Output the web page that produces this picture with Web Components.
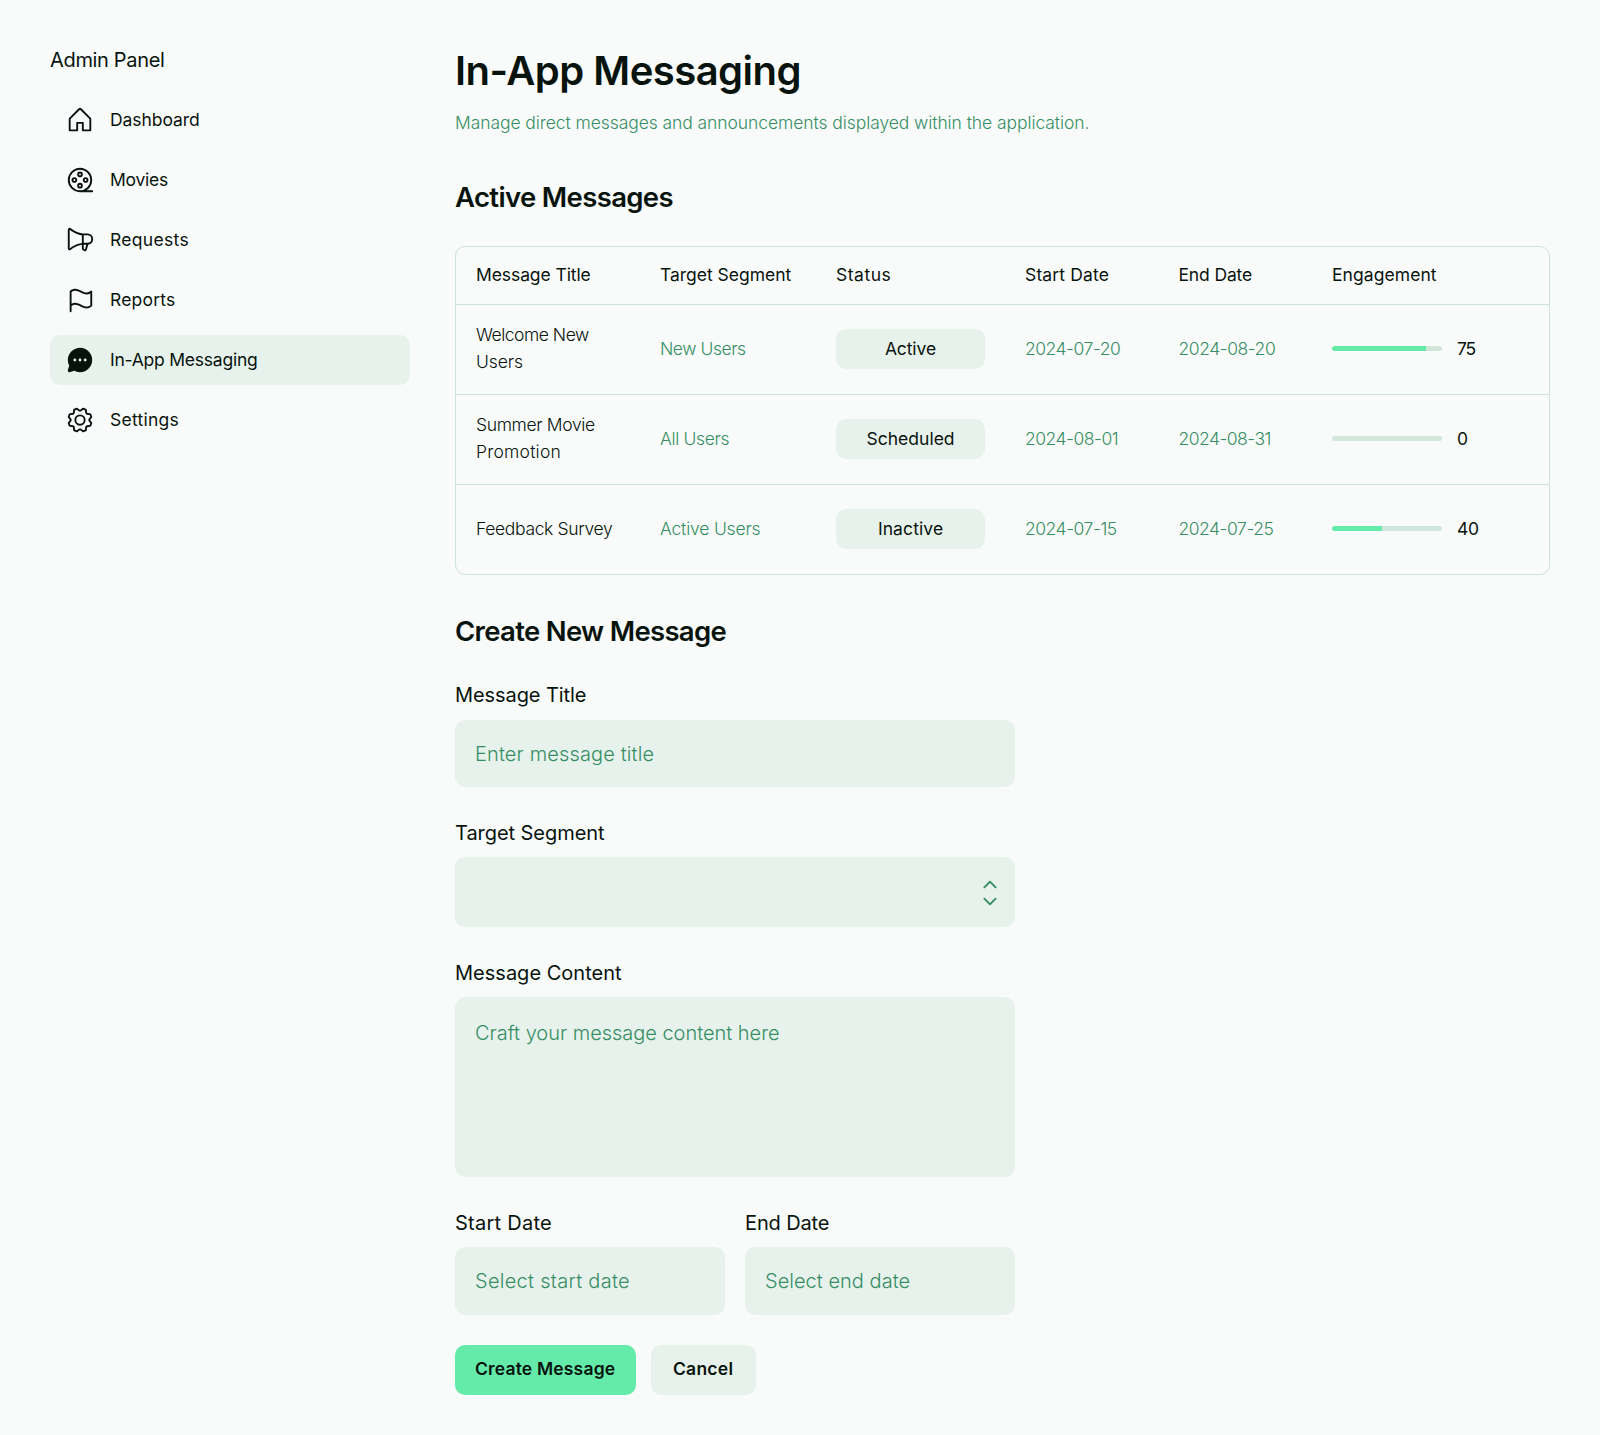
<!DOCTYPE html>
<html lang="en">
<head>
<meta charset="utf-8">
<title>In-App Messaging</title>
<style>
  :root {
    --bg: #f9fbfa; --ink: #08130d; --green: #368e64; --soft: #e8f2ec;
    --line: #cbe4d8; --track: #d0e6da; --primary: #64eba9;
  }
  body { margin: 0; background: var(--bg); color: var(--ink); font: 400 17.5px/26.25px Inter, "Liberation Sans", sans-serif; }
</style>
</head>
<body>
<app-shell>
  <side-nav slot="side">
    <fit-text slot="title" w="114">Admin Panel</fit-text>
    <nav-item icon="house"><fit-text w="88">Dashboard</fit-text></nav-item>
    <nav-item icon="reel"><fit-text w="57">Movies</fit-text></nav-item>
    <nav-item icon="megaphone"><fit-text w="77.5">Requests</fit-text></nav-item>
    <nav-item icon="flag"><fit-text w="64">Reports</fit-text></nav-item>
    <nav-item icon="chat" active><fit-text w="146">In-App Messaging</fit-text></nav-item>
    <nav-item icon="gear"><fit-text w="68.5">Settings</fit-text></nav-item>
  </side-nav>

  <page-heading>
    <fit-text slot="title" w="342.5">In-App Messaging</fit-text>
    <fit-text w="632.5">Manage direct messages and announcements displayed within the application.</fit-text>
  </page-heading>

  <section-title><fit-text w="217.5">Active Messages</fit-text></section-title>
  <message-table>
    <fit-text slot="head" w="113.6">Message Title</fit-text>
    <fit-text slot="head" w="131.5">Target Segment</fit-text>
    <fit-text slot="head" w="54.6">Status</fit-text>
    <fit-text slot="head" w="83.8">Start Date</fit-text>
    <fit-text slot="head" w="72.5">End Date</fit-text>
    <fit-text slot="head" w="103.8">Engagement</fit-text>
    <message-row fill="85" tall>
      <fit-text slot="title" w="113">Welcome New</fit-text><fit-text slot="title" w="46">Users</fit-text>
      <fit-text slot="segment" w="85">New Users</fit-text>
      <fit-text slot="status" w="51">Active</fit-text>
      <fit-text slot="start" w="94">2024-07-20</fit-text>
      <fit-text slot="end" w="95.4">2024-08-20</fit-text>
      <fit-text slot="value" w="18.4">75</fit-text>
    </message-row>
    <message-row fill="0" tall>
      <fit-text slot="title" w="118">Summer Movie</fit-text><fit-text slot="title" w="82.5">Promotion</fit-text>
      <fit-text slot="segment" w="69.5">All Users</fit-text>
      <fit-text slot="status" w="87.5">Scheduled</fit-text>
      <fit-text slot="start" w="91.8">2024-08-01</fit-text>
      <fit-text slot="end" w="91">2024-08-31</fit-text>
      <fit-text slot="value">0</fit-text>
    </message-row>
    <message-row fill="45">
      <fit-text slot="title" w="136">Feedback Survey</fit-text>
      <fit-text slot="segment" w="100.5">Active Users</fit-text>
      <fit-text slot="status" w="64">Inactive</fit-text>
      <fit-text slot="start" w="90.8">2024-07-15</fit-text>
      <fit-text slot="end" w="94">2024-07-25</fit-text>
      <fit-text slot="value" w="20">40</fit-text>
    </message-row>
  </message-table>

  <section-title><fit-text w="270.5">Create New Message</fit-text></section-title>
  <message-form>
    <form-field style="--h: 67px">
      <fit-text slot="label" w="129.7">Message Title</fit-text><fit-text w="177.5">Enter message title</fit-text>
    </form-field>
    <form-field kind="select"><fit-text slot="label" w="150">Target Segment</fit-text></form-field>
    <form-field kind="area">
      <fit-text slot="label" w="166">Message Content</fit-text><fit-text w="303">Craft your message content here</fit-text>
    </form-field>
    <form-field kind="date" slot="dates">
      <fit-text slot="label" w="95">Start Date</fit-text><fit-text w="153">Select start date</fit-text>
    </form-field>
    <form-field kind="date" slot="dates">
      <fit-text slot="label" w="82.7">End Date</fit-text><fit-text w="143.5">Select end date</fit-text>
    </form-field>
    <push-button slot="actions" primary><fit-text w="139.9">Create Message</fit-text></push-button>
    <push-button slot="actions"><fit-text w="59.5">Cancel</fit-text></push-button>
  </message-form>
</app-shell>

<script>
const ICONS = {
  house: "M219.31,108.68l-80-80a16,16,0,0,0-22.62,0l-80,80A15.87,15.87,0,0,0,32,120v96a8,8,0,0,0,8,8h64a8,8,0,0,0,8-8V160h32v56a8,8,0,0,0,8,8h64a8,8,0,0,0,8-8V120A15.87,15.87,0,0,0,219.31,108.68ZM208,208H160V152a8,8,0,0,0-8-8H104a8,8,0,0,0-8,8v56H48V120l80-80,80,80Z",
  reel: "M232,216H183.36A103.95,103.95,0,1,0,128,232H232a8,8,0,0,0,0-16ZM40,128a88,88,0,1,1,88,88A88.1,88.1,0,0,1,40,128Zm88-24a24,24,0,1,0-24-24A24,24,0,0,0,128,104Zm0-32a8,8,0,1,1-8,8A8,8,0,0,1,128,72Zm24,104a24,24,0,1,0-24,24A24,24,0,0,0,152,176Zm-32,0a8,8,0,1,1,8,8A8,8,0,0,1,120,176Zm56-24a24,24,0,1,0-24-24A24,24,0,0,0,176,152Zm0-32a8,8,0,1,1-8,8A8,8,0,0,1,176,120ZM80,104a24,24,0,1,0,24,24A24,24,0,0,0,80,104Zm0,32a8,8,0,1,1,8-8A8,8,0,0,1,80,136Z",
  megaphone: "M240,120a48.05,48.05,0,0,0-48-48H152.2c-2.91-.17-53.62-3.74-101.91-44.24A16,16,0,0,0,24,40V200a16,16,0,0,0,26.29,12.25c37.77-31.68,77-40.76,93.71-43.3v31.72A16,16,0,0,0,151.12,214l11,7.33A16,16,0,0,0,186.5,212l11.77-44.36A48.07,48.07,0,0,0,240,120ZM40,199.93V40h0c42.81,35.91,86.63,45,104,47.24v65.48C126.65,155,82.84,164.07,40,199.93Zm131,8,0,.11-11-7.33V168h21.6ZM192,152H160V88h32a32,32,0,1,1,0,64Z",
  flag: "M42.76,50A8,8,0,0,0,40,56V224a8,8,0,0,0,16,0V179.77c26.79-21.16,49.87-9.75,76.45,3.41,16.4,8.11,34.06,16.85,53,16.85,13.93,0,28.54-4.75,43.82-18a8,8,0,0,0,2.76-6V56A8,8,0,0,0,218.76,50c-28,24.23-51.72,12.49-79.21-1.12C111.07,34.76,78.78,18.79,42.76,50ZM216,172.25c-26.79,21.16-49.87,9.74-76.45-3.41-25-12.35-52.81-26.13-83.55-8.4V59.79c26.79-21.16,49.87-9.75,76.45,3.4,25,12.35,52.82,26.13,83.55,8.4Z",
  chat: "M128,24A104,104,0,0,0,36.18,176.88L24.83,210.93a16,16,0,0,0,20.24,20.24l34.05-11.35A104,104,0,1,0,128,24ZM84,140a12,12,0,1,1,12-12A12,12,0,0,1,84,140Zm44,0a12,12,0,1,1,12-12A12,12,0,0,1,128,140Zm44,0a12,12,0,1,1,12-12A12,12,0,0,1,172,140Z",
  gear: "M128,80a48,48,0,1,0,48,48A48.05,48.05,0,0,0,128,80Zm0,80a32,32,0,1,1,32-32A32,32,0,0,1,128,160Zm88-29.84q.06-2.16,0-4.32l14.92-18.64a8,8,0,0,0,1.48-7.06,107.21,107.21,0,0,0-10.88-26.25,8,8,0,0,0-6-3.93l-23.72-2.64q-1.48-1.56-3-3L186,40.54a8,8,0,0,0-3.94-6,107.71,107.71,0,0,0-26.25-10.87,8,8,0,0,0-7.06,1.49L130.16,40Q128,40,125.84,40L107.2,25.11a8,8,0,0,0-7.06-1.48A107.6,107.6,0,0,0,73.89,34.51a8,8,0,0,0-3.93,6L67.32,64.27q-1.56,1.49-3,3L40.54,70a8,8,0,0,0-6,3.94,107.71,107.71,0,0,0-10.87,26.25,8,8,0,0,0,1.49,7.06L40,125.84Q40,128,40,130.16L25.11,148.8a8,8,0,0,0-1.48,7.06,107.21,107.21,0,0,0,10.88,26.25,8,8,0,0,0,6,3.93l23.72,2.64q1.49,1.56,3,3L70,215.46a8,8,0,0,0,3.94,6,107.71,107.71,0,0,0,26.25,10.87,8,8,0,0,0,7.06-1.49L125.84,216q2.16.06,4.32,0l18.64,14.92a8,8,0,0,0,7.06,1.48,107.21,107.21,0,0,0,26.25-10.88,8,8,0,0,0,3.93-6l2.64-23.72q1.56-1.48,3-3L215.46,186a8,8,0,0,0,6-3.94,107.71,107.71,0,0,0,10.87-26.25,8,8,0,0,0-1.49-7.06Zm-16.1-6.5a73.93,73.93,0,0,1,0,8.68,8,8,0,0,0,1.74,5.48l14.19,17.73a91.57,91.57,0,0,1-6.23,15L187,173.11a8,8,0,0,0-5.1,2.64,74.11,74.11,0,0,1-6.14,6.14,8,8,0,0,0-2.64,5.1l-2.51,22.58a91.32,91.32,0,0,1-15,6.23l-17.74-14.19a8,8,0,0,0-5-1.75h-.48a73.93,73.93,0,0,1-8.68,0,8,8,0,0,0-5.48,1.74L100.45,215.8a91.57,91.57,0,0,1-15-6.23L82.89,187a8,8,0,0,0-2.64-5.1,74.11,74.11,0,0,1-6.14-6.14,8,8,0,0,0-5.1-2.64L46.43,170.6a91.32,91.32,0,0,1-6.23-15l14.19-17.74a8,8,0,0,0,1.74-5.48,73.93,73.93,0,0,1,0-8.68,8,8,0,0,0-1.74-5.48L40.2,100.45a91.57,91.57,0,0,1,6.23-15L69,82.89a8,8,0,0,0,5.1-2.64,74.11,74.11,0,0,1,6.14-6.14A8,8,0,0,0,82.89,69L85.4,46.43a91.32,91.32,0,0,1,15-6.23l17.74,14.19a8,8,0,0,0,5.48,1.74,73.93,73.93,0,0,1,8.68,0,8,8,0,0,0,5.48-1.74L155.55,40.2a91.57,91.57,0,0,1,15,6.23L173.11,69a8,8,0,0,0,2.64,5.1,74.11,74.11,0,0,1,6.14,6.14,8,8,0,0,0,5.1,2.64l22.58,2.51a91.32,91.32,0,0,1,6.23,15l-14.19,17.74A8,8,0,0,0,199.87,123.66Z",
  caret: "M181.66,170.34a8,8,0,0,1,0,11.32l-48,48a8,8,0,0,1-11.32,0l-48-48a8,8,0,0,1,11.32-11.32L128,212.69l42.34-42.35A8,8,0,0,1,181.66,170.34Zm-96-84.68L128,43.31l42.34,42.35a8,8,0,0,0,11.32-11.32l-48-48a8,8,0,0,0-11.32,0l-48,48A8,8,0,0,0,85.66,85.66Z"
};
const svg = name => `<svg width="30" height="30" viewBox="0 0 256 256" fill="currentColor"><path d="${ICONS[name]}"/></svg>`;

const define = (tag, html) => customElements.define(tag, class extends HTMLElement {
  constructor() {
    super();
    this.attachShadow({ mode: "open" });
  }
  connectedCallback() {
    this.shadowRoot.innerHTML = typeof html === "function" ? html(this) : html;
  }
});

define("app-shell", `<style>
  :host { display: flex; align-items: flex-start; gap: 5px; padding: 25px 30px; box-sizing: border-box; min-height: 1435px; }
  aside { width: 400px; flex: none; }
  main { flex: 1; min-width: 0; display: flex; flex-direction: column; }
</style><aside><slot name="side"></slot></aside><main><slot></slot></main>`);

define("side-nav", `<style>
  :host { display: flex; flex-direction: column; gap: 20px; padding: 20px; width: 360px; }
  header { font-size: 20px; line-height: 30px; }
  nav { display: flex; flex-direction: column; gap: 10px; }
</style><header><slot name="title"></slot></header><nav><slot></slot></nav>`);

define("nav-item", el => `<style>
  :host { display: flex; align-items: center; gap: 15.3px; height: 50px; padding: 0 15px 0 14.7px; border-radius: 10px; }
  :host([active]) { background: var(--soft); }
  svg { display: block; flex: none; }
</style>${svg(el.getAttribute("icon"))}<slot></slot>`);

define("page-heading", `<style>
  :host { display: flex; flex-direction: column; gap: 14px; padding: 21px 20px 20px; }
  h1 { margin: 0; font-size: 40px; line-height: 50px; font-weight: 600; }
  p { margin: 0; line-height: 26px; color: var(--green); font-weight: 300; }
</style><h1><slot name="title"></slot></h1><p><slot></slot></p>`);

define("section-title", `<style>
  :host { display: block; padding: 24px 20px 17px; }
  h2 { margin: 0; font-size: 27.5px; line-height: 34px; font-weight: 600; }
</style><h2><slot></slot></h2>`);

define("message-table", `<style>
  :host { display: block; margin: 15px 20px; border: 1px solid var(--line); border-radius: 10px; --cols: 184px 176px 189px 153.5px 153.5px 1fr; }
  header { display: grid; grid-template-columns: var(--cols); align-items: center; height: 57px; }
  ::slotted([slot=head]) { padding-left: 20px; }
</style><header><slot name="head"></slot></header><slot></slot>`);

define("message-row", el => `<style>
  :host { display: grid; grid-template-columns: var(--cols); align-items: center; height: 89px; border-top: 1px solid var(--line); }
  .cell { padding: 0 20px; }
  .title { display: flex; flex-direction: column; font-weight: 300; }
  :host([tall]) .title { padding-bottom: 2px; }
  .green { color: var(--green); font-weight: 300; white-space: nowrap; }
  .status { padding-bottom: 1px; }
  .badge { display: flex; align-items: center; justify-content: center; height: 40px; border-radius: 10px; background: var(--soft); }
  .badge { box-sizing: border-box; padding-top: 1px; }
  .meter { display: flex; align-items: center; gap: 15px; }
  .track { width: 110px; height: 5px; margin-bottom: 2px; border-radius: 2.5px; background: var(--track); overflow: hidden; }
  .fill { height: 5px; width: ${el.getAttribute("fill")}%; background: var(--primary); border-radius: 2.5px 0 0 2.5px; }
</style>
<div class="cell title"><slot name="title"></slot></div>
<div class="cell green"><slot name="segment"></slot></div>
<div class="cell status"><div class="badge"><slot name="status"></slot></div></div>
<div class="cell green"><slot name="start"></slot></div>
<div class="cell green"><slot name="end"></slot></div>
<div class="cell meter"><div class="track"><div class="fill"></div></div><slot name="value"></slot></div>`);

define("message-form", `<style>
  :host { display: flex; flex-direction: column; width: 560px; padding: 0 20px; }
  .dates { display: grid; grid-template-columns: 1fr 1fr; gap: 20px; }
  .actions { display: flex; gap: 15px; padding: 15px 0; }
</style><slot></slot><div class="dates"><slot name="dates"></slot></div><div class="actions"><slot name="actions"></slot></div>`);

define("form-field", el => `<style>
  :host { display: flex; flex-direction: column; gap: 10px; padding: 15px 0; font-size: 20px; line-height: 30px; }
  :host([kind]) { padding-top: 15.5px; gap: 9.5px; }
  .box { display: flex; align-items: center; box-sizing: border-box; height: var(--h, 68px); padding: 0 20px; border-radius: 10px; background: var(--soft); color: var(--green); font-weight: 300; }
  :host([kind=select]) .box { height: 70px; justify-content: flex-end; padding: 1px 10px 0 20px; }
  :host([kind=area]) .box { height: 180px; align-items: flex-start; padding-top: 20.5px; }
</style><label><slot name="label"></slot></label><div class="box"><slot></slot>${el.getAttribute("kind") === "select" ? svg("caret") : ""}</div>`);

define("push-button", `<style>
  :host { display: block; }
  button { font: inherit; font-weight: 600; color: inherit; border: 0; height: 50px; min-width: 105px; padding: 0 21px 2px 20px; border-radius: 10px; background: var(--soft); display: flex; align-items: center; justify-content: center; }
  :host([primary]) button { background: var(--primary); width: 181px; }
</style><button><slot></slot></button>`);

// Tracks its text so that the inked run spans exactly `w` pixels.
const pen = document.createElement("canvas").getContext("2d");
customElements.define("fit-text", class extends HTMLElement {
  constructor() {
    super();
    this.attachShadow({ mode: "open" }).innerHTML =
      `<style>:host { display: block; white-space: nowrap; }</style><slot></slot>`;
  }
  connectedCallback() {
    const w = parseFloat(this.getAttribute("w"));
    if (!w) return;
    const cs = getComputedStyle(this), text = this.textContent;
    pen.font = `${cs.fontWeight} ${cs.fontSize} ${cs.fontFamily}`;
    const m = pen.measureText(text);
    const ink = m.actualBoundingBoxRight + m.actualBoundingBoxLeft;
    const ls = (w - ink) / (text.length - 1);
    this.style.letterSpacing = ls.toFixed(3) + "px";
    this.style.marginRight = (-ls).toFixed(3) + "px";
  }
});
</script>
</body>
</html>
